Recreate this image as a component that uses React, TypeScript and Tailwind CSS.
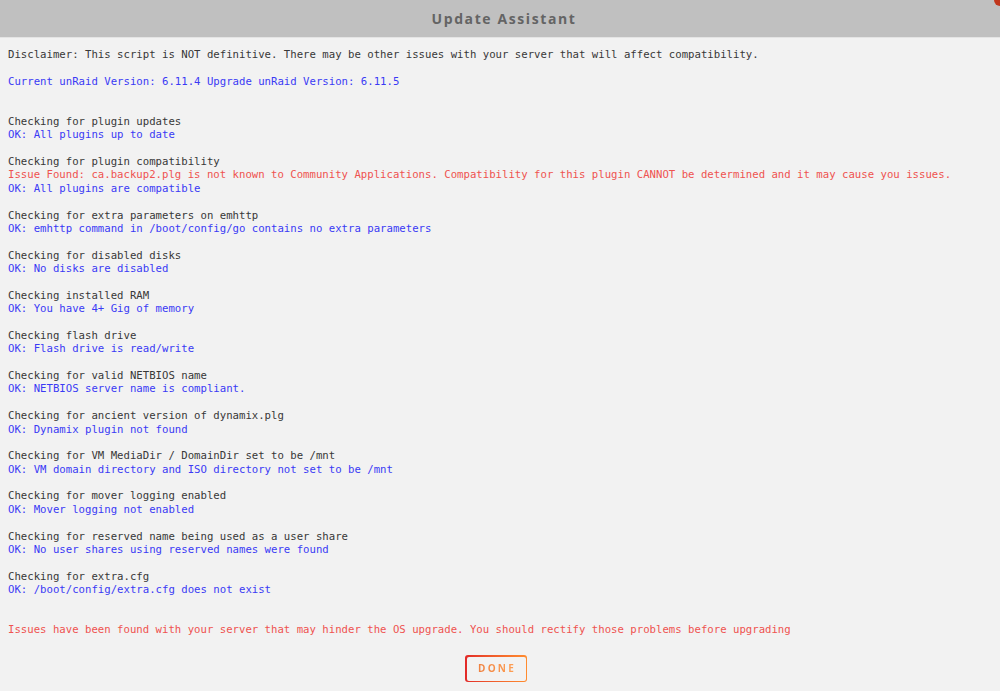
const LINES: { t: string; c?: 'ok' | 'err' }[] = [
  { t: 'Disclaimer: This script is NOT definitive. There may be other issues with your server that will affect compatibility.' },
  { t: '' },
  { t: 'Current unRaid Version: 6.11.4 Upgrade unRaid Version: 6.11.5', c: 'ok' },
  { t: '' },
  { t: '' },
  { t: 'Checking for plugin updates' },
  { t: 'OK: All plugins up to date', c: 'ok' },
  { t: '' },
  { t: 'Checking for plugin compatibility' },
  {
    t: 'Issue Found: ca.backup2.plg is not known to Community Applications. Compatibility for this plugin CANNOT be determined and it may cause you issues.',
    c: 'err',
  },
  { t: 'OK: All plugins are compatible', c: 'ok' },
  { t: '' },
  { t: 'Checking for extra parameters on emhttp' },
  { t: 'OK: emhttp command in /boot/config/go contains no extra parameters', c: 'ok' },
  { t: '' },
  { t: 'Checking for disabled disks' },
  { t: 'OK: No disks are disabled', c: 'ok' },
  { t: '' },
  { t: 'Checking installed RAM' },
  { t: 'OK: You have 4+ Gig of memory', c: 'ok' },
  { t: '' },
  { t: 'Checking flash drive' },
  { t: 'OK: Flash drive is read/write', c: 'ok' },
  { t: '' },
  { t: 'Checking for valid NETBIOS name' },
  { t: 'OK: NETBIOS server name is compliant.', c: 'ok' },
  { t: '' },
  { t: 'Checking for ancient version of dynamix.plg' },
  { t: 'OK: Dynamix plugin not found', c: 'ok' },
  { t: '' },
  { t: 'Checking for VM MediaDir / DomainDir set to be /mnt' },
  { t: 'OK: VM domain directory and ISO directory not set to be /mnt', c: 'ok' },
  { t: '' },
  { t: 'Checking for mover logging enabled' },
  { t: 'OK: Mover logging not enabled', c: 'ok' },
  { t: '' },
  { t: 'Checking for reserved name being used as a user share' },
  { t: 'OK: No user shares using reserved names were found', c: 'ok' },
  { t: '' },
  { t: 'Checking for extra.cfg' },
  { t: 'OK: /boot/config/extra.cfg does not exist', c: 'ok' },
  { t: '' },
  { t: '' },
  {
    t: 'Issues have been found with your server that may hinder the OS upgrade. You should rectify those problems before upgrading',
    c: 'err',
  },
]

export default function App() {
  return (
    <div className="relative w-[1000px] h-[691px] overflow-hidden bg-[#f2f2f2]">
      {/* header */}
      <div className="h-[38px] bg-[#c0c0c0] border-b border-[#e4e4e4] flex items-center justify-center">
        <h1 className="font-['Open_Sans',sans-serif] font-bold text-[14px] tracking-[1.6px] text-[#646464] ml-[8px]">
          Update Assistant
        </h1>
      </div>
      <span className="absolute -top-[6px] -right-[6px] w-[12px] h-[12px] rounded-full bg-[#c0361c]" />

      {/* output */}
      <div className="px-[8px] pt-[10px] font-['DejaVu_Sans_Mono',monospace] text-[10.67px] leading-[13.38px] whitespace-pre">
        {LINES.map((l, i) => (
          <div
            key={i}
            className={
              l.c === 'ok' ? 'text-[#3a3af5]' : l.c === 'err' ? 'text-[#ef5350]' : 'text-[#383838]'
            }
          >
            {l.t || '\u00a0'}
          </div>
        ))}
      </div>

      {/* done */}
      <div className="absolute left-0 right-0 top-[655px] flex justify-center">
        <button className="ml-[-8px] rounded-[3px] p-[1.5px] bg-gradient-to-r from-[#e22828] to-[#ff8c2f]">
          <span className="flex w-[59px] h-[24px] items-center justify-center rounded-[2px] bg-[#f2f2f2]">
            <span className="font-['Open_Sans',sans-serif] font-bold text-[10px] tracking-[2.2px] pl-[2px] bg-gradient-to-r from-[#ee8040] to-[#ffa055] bg-clip-text text-transparent">
              DONE
            </span>
          </span>
        </button>
      </div>
    </div>
  )
}
